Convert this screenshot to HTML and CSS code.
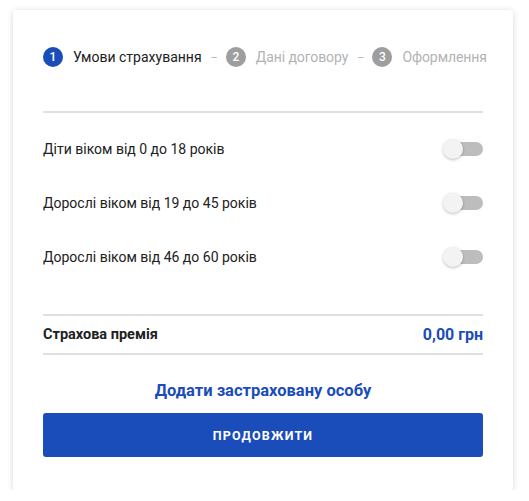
FILE: index.html
```html
<!DOCTYPE html>
<html lang="uk">
<head>
<meta charset="utf-8">
<link rel="stylesheet" href="styles.css">
</head>
<body>
<div class="card">
  <div class="steps">
    <div class="step active"><span class="num">1</span><span class="label">Умови страхування</span></div>
    <span class="dash">–</span>
    <div class="step"><span class="num">2</span><span class="label">Дані договору</span></div>
    <span class="dash">–</span>
    <div class="step"><span class="num">3</span><span class="label">Оформлення</span></div>
  </div>
  <div class="sep top-sep"></div>
  <div class="rows">
    <div class="row"><span>Діти віком від 0 до 18 років</span><span class="switch"><span class="track"></span><span class="thumb"></span></span></div>
    <div class="row"><span>Дорослі віком від 19 до 45 років</span><span class="switch"><span class="track"></span><span class="thumb"></span></span></div>
    <div class="row"><span>Дорослі віком від 46 до 60 років</span><span class="switch"><span class="track"></span><span class="thumb"></span></span></div>
  </div>
  <div class="total">
    <span class="total-label">Страхова премія</span>
    <span class="total-value">0,00 грн</span>
  </div>
  <div class="add">Додати застраховану особу</div>
  <button class="btn">ПРОДОВЖИТИ</button>
</div>
</body>
</html>
```
FILE: styles.css
```css
html, body {
  margin: 0;
  padding: 0;
  background: #ffffff;
}
body {
  font-family: Roboto, "Noto Sans", sans-serif;
  color: #212121;
  padding: 10px 16px 0 13px;
}
.card {
  width: 500px;
  height: 480px;
  box-sizing: border-box;
  background: #fff;
  border-radius: 3px;
  box-shadow: 0 1px 6px rgba(0,0,0,0.16);
  padding: 37px 30px 0 30px;
  display: flex;
  flex-direction: column;
}
.steps {
  display: flex;
  align-items: center;
  height: 20px;
  font-size: 14px;
  white-space: nowrap;
}
.step {
  display: flex;
  align-items: center;
  color: #b3b3b3;
}
.step.active { color: #212121; }
.num {
  width: 20px;
  height: 20px;
  border-radius: 50%;
  background: #9e9e9e;
  color: #fff;
  font-size: 12px;
  font-weight: 500;
  display: flex;
  align-items: center;
  justify-content: center;
  margin: 0 10px 0 0;
}
.step.active .num { background: #1a4cba; }
.dash {
  color: #b3b3b3;
  margin: 0 8px 0 9px;
  font-size: 11px;
}
.step:not(.active) .label { letter-spacing: -0.1px; }
.sep {
  height: 2px;
  background: #e0e0e0;
}
.top-sep {
  margin-top: 44px;
}
.rows {
  display: flex;
  flex-direction: column;
  padding-top: 9px;
}
.row {
  height: 54px;
  display: flex;
  align-items: center;
  justify-content: space-between;
  font-size: 14px;
}
.switch {
  position: relative;
  width: 40px;
  height: 20px;
  flex: none;
}
.track {
  position: absolute;
  right: 0;
  top: 3px;
  width: 34px;
  height: 14px;
  border-radius: 7px;
  background: #bdbdbd;
}
.thumb {
  position: absolute;
  left: 0;
  top: 0;
  width: 20px;
  height: 20px;
  border-radius: 50%;
  background: #f3f3f3;
  box-shadow: 0 1px 3px rgba(0,0,0,0.25);
}
.total {
  margin-top: 30px;
  border-top: 2px solid #e0e0e0;
  border-bottom: 2px solid #e0e0e0;
  height: 37px;
  display: flex;
  align-items: center;
  justify-content: space-between;
}
.total-label {
  font-size: 14.5px;
  font-weight: 700;
}
.total-value {
  font-size: 16px;
  font-weight: 700;
  color: #1a4cba;
}
.add {
  margin-top: 25px;
  text-align: center;
  font-size: 16.5px;
  font-weight: 700;
  color: #1a4cba;
  line-height: 22px;
}
.btn {
  margin-top: 11px;
  height: 44px;
  border: none;
  border-radius: 3px;
  background: #1a4cba;
  color: #fff;
  font-family: Roboto, sans-serif;
  font-size: 12.5px;
  font-weight: 700;
  letter-spacing: 1.2px;
}
```
